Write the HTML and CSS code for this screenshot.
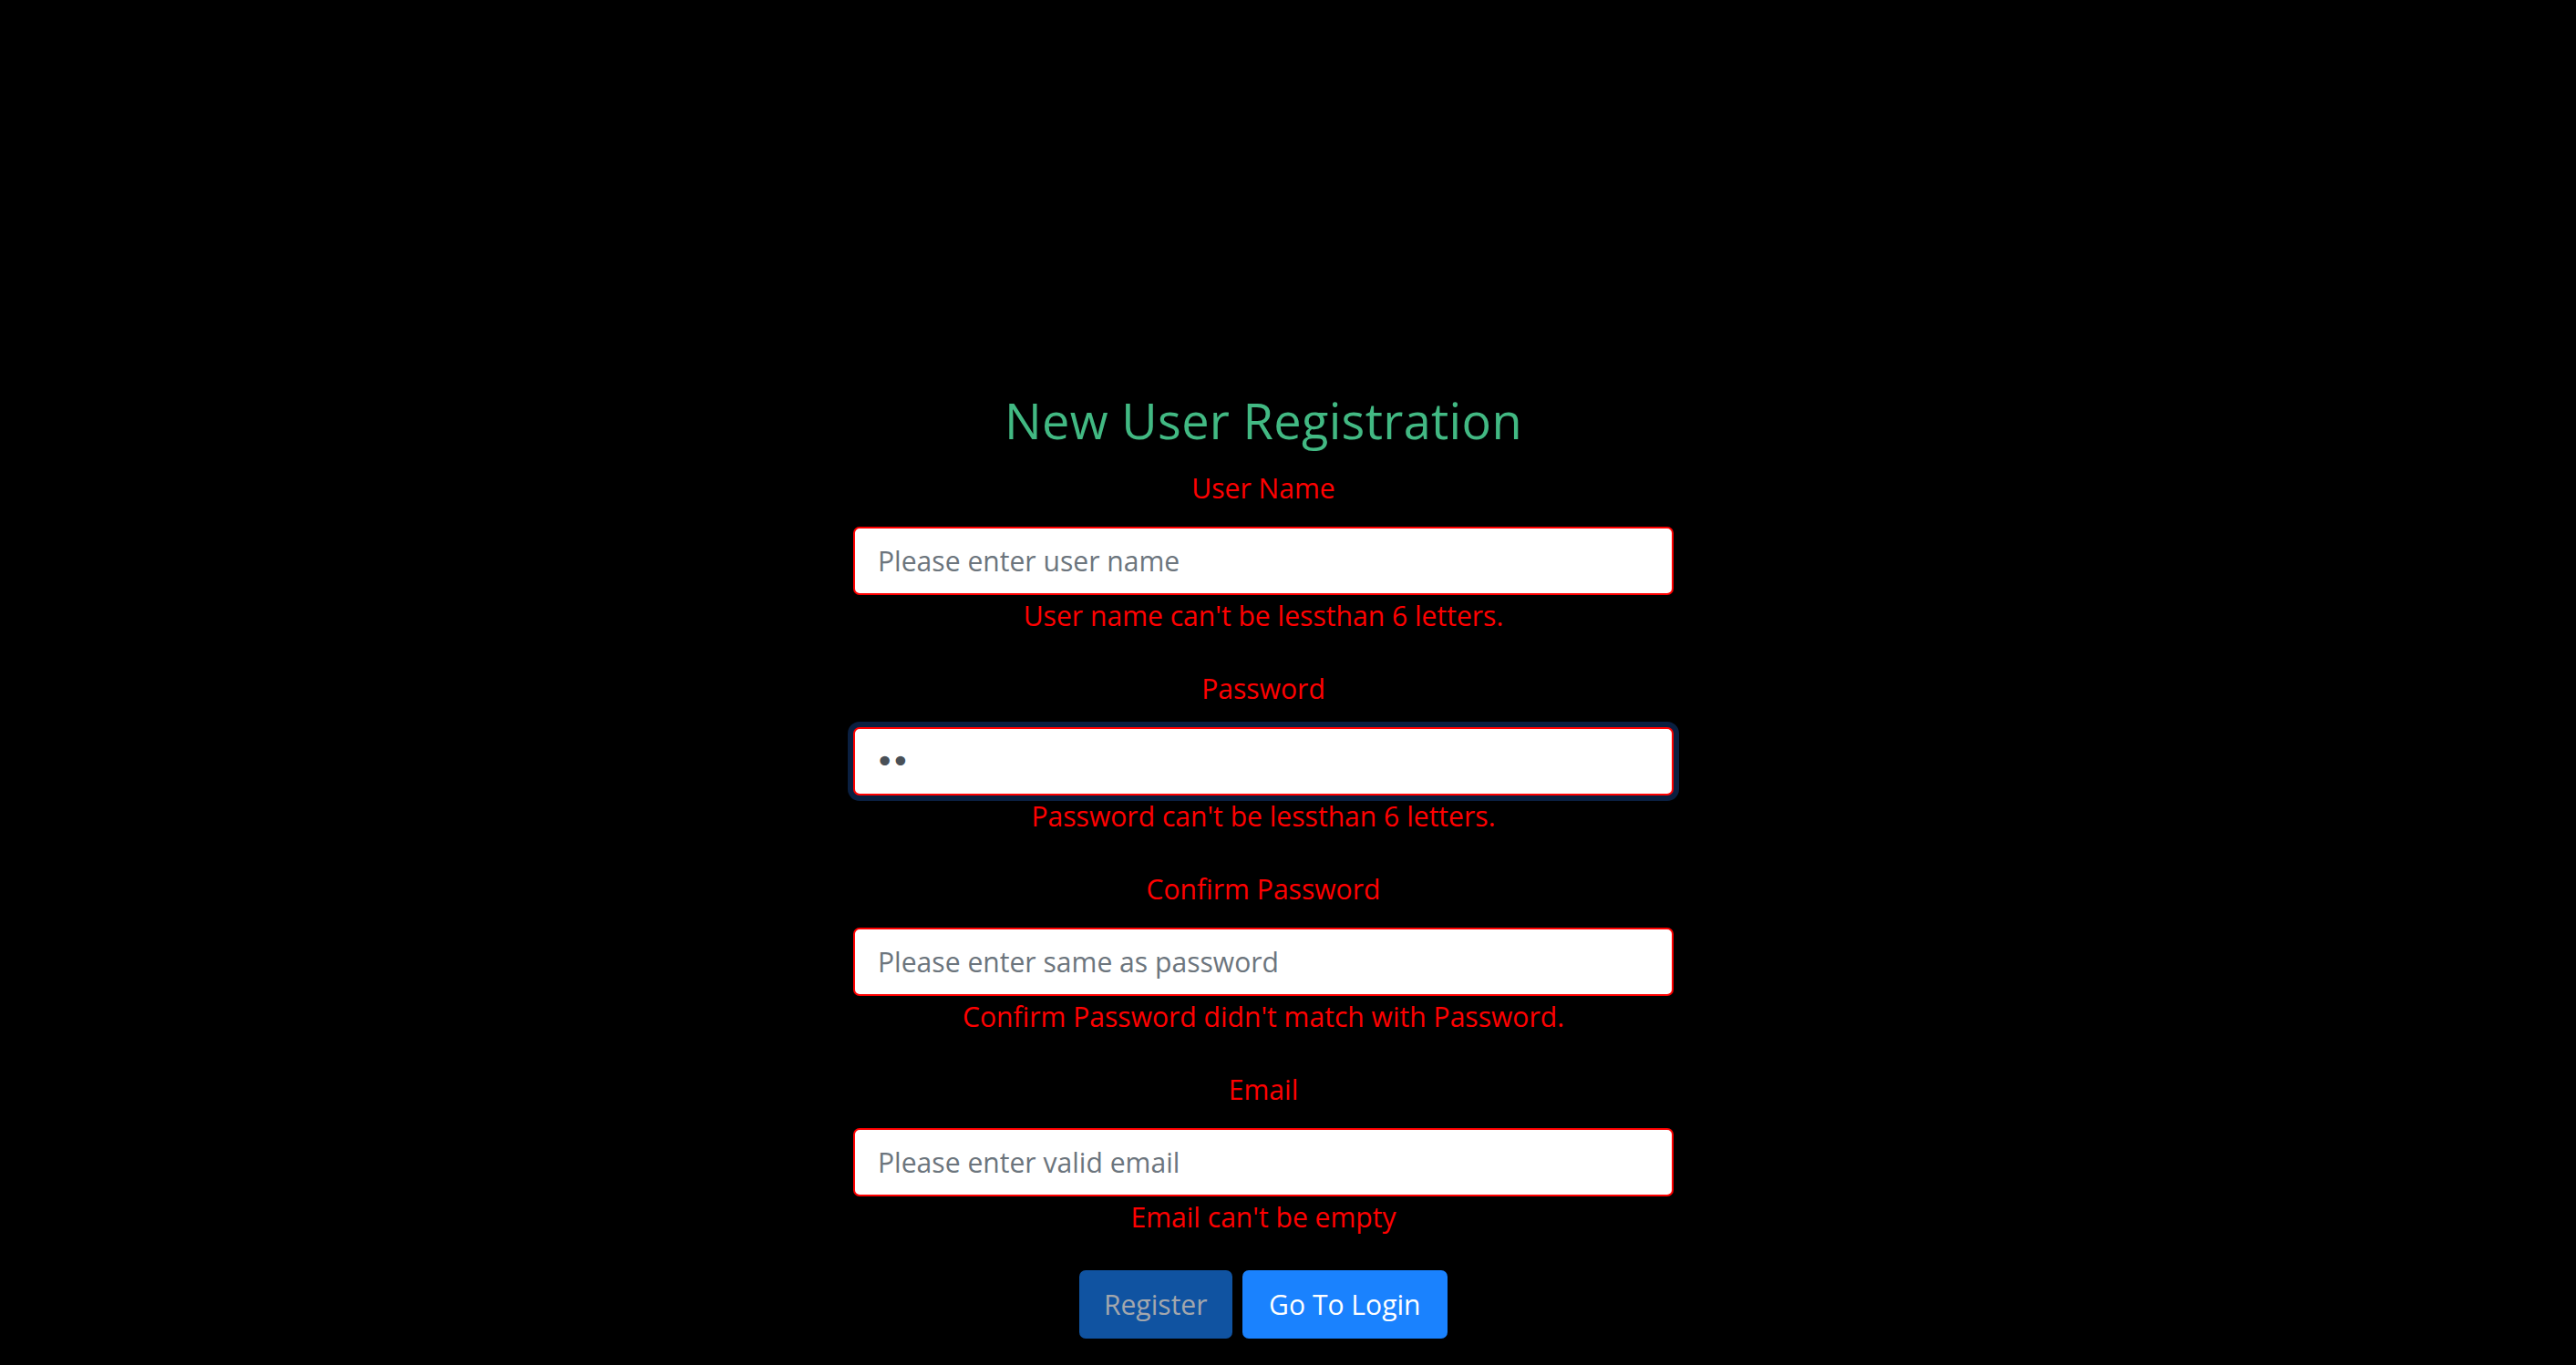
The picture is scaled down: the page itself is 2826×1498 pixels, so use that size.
FILE: index.html
```html
<!DOCTYPE html>
<html lang="en">
<head>
<meta charset="utf-8">
<title>New User Registration</title>
<link rel="stylesheet" href="styles.css">
</head>
<body>
<div class="app">
  <form class="reg-form" novalidate>
    <h3 class="title">New User Registration</h3>
    <div class="group">
      <label class="label" for="uname">User Name</label>
      <input class="field" id="uname" type="text" placeholder="Please enter user name">
      <div class="error">User name can't be lessthan 6 letters.</div>
    </div>
    <div class="group">
      <label class="label" for="pwd">Password</label>
      <input class="field field-secret focused" id="pwd" type="password" value="ab">
      <div class="error">Password can't be lessthan 6 letters.</div>
    </div>
    <div class="group">
      <label class="label" for="cpwd">Confirm Password</label>
      <input class="field" id="cpwd" type="password" placeholder="Please enter same as password">
      <div class="error">Confirm Password didn't match with Password.</div>
    </div>
    <div class="group">
      <label class="label" for="email">Email</label>
      <input class="field" id="email" type="email" placeholder="Please enter valid email">
      <div class="error">Email can't be empty</div>
    </div>
    <div class="actions">
      <button type="button" class="btn btn-disabled" disabled>Register</button>
      <button type="button" class="btn btn-primary">Go To Login</button>
    </div>
  </form>
</div>
</body>
</html>
```
FILE: styles.css
```css
html, body {
  margin: 0;
  padding: 0;
  background: #000;
}
body {
  font-family: "Open Sans", "Noto Sans", sans-serif;
  font-size: 30.1px;
  line-height: 46px;
  color: #ff0000;
  height: 1498px;
  overflow: hidden;
}
.app {
  display: flex;
  justify-content: center;
  padding-top: 428px;
  padding-right: 54px;
}
.reg-form {
  width: 900px;
  display: flex;
  flex-direction: column;
  align-items: stretch;
  text-align: center;
}
.title {
  margin: 0 0 19px;
  font-size: 54.1px;
  line-height: 66px;
  font-weight: 400;
  letter-spacing: 0.3px;
  color: #42b983;
}
.group {
  display: flex;
  flex-direction: column;
  margin-bottom: 34px;
}
.label {
  display: block;
  margin-bottom: 19px;
}
.field {
  box-sizing: border-box;
  width: 100%;
  height: 75px;
  margin: 0;
  padding: 0 25px;
  border: 2px solid #ff0000;
  border-radius: 7px;
  background: #fff;
  color: #495057;
  font-family: inherit;
  font-size: 30.1px;
  outline: none;
}
.field::placeholder {
  color: #6c757d;
  opacity: 1;
}
.field-secret {
  font-family: "DejaVu Sans", sans-serif;
  font-size: 36px;
  letter-spacing: -4px;
  padding-left: 22px;
}
.field.focused {
  box-shadow: 0 0 0 6px #0a1f40;
}
.error {
  color: #ff0000;
}
.actions {
  display: flex;
  justify-content: center;
  gap: 11px;
  margin-top: 1px;
}
.btn {
  height: 75px;
  padding: 0 27px;
  border: none;
  border-radius: 7px;
  font-family: inherit;
  font-size: 30.1px;
}
.btn-disabled {
  background: #1053a1;
  color: #a3a7ad;
}
.btn-primary {
  padding: 0 29.5px;
  background: #1a82fe;
  color: #fff;
}
```
